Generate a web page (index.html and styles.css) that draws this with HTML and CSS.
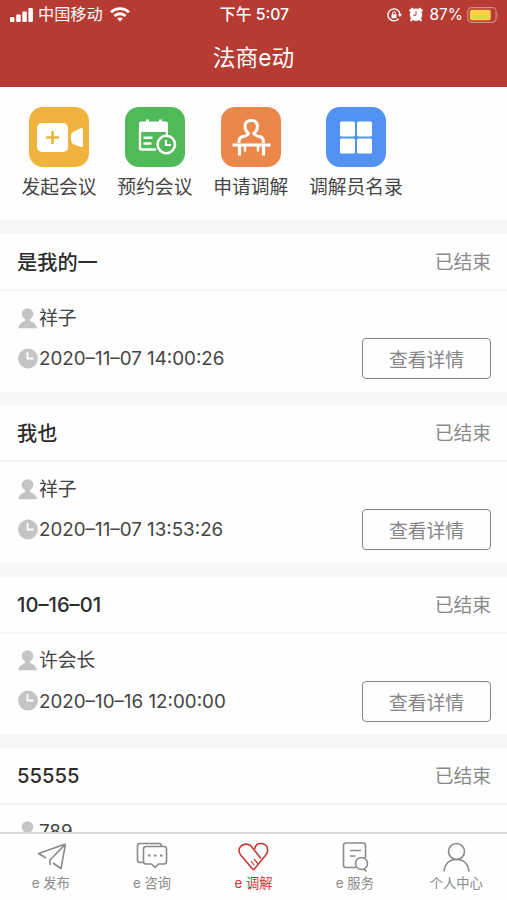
FILE: index.html
```
<!DOCTYPE html>
<html lang="zh-CN">
<head>
<meta charset="UTF-8" />
<meta name="viewport" content="width=device-width, initial-scale=1" />
<title>法商e动</title>
<link rel="stylesheet" href="styles.css">
</head>
<body>
<div id="app">
  <header>
    <div class="status-bar">
      <div class="status-left">
        <svg class="signal" width="23" height="14" viewBox="0 0 23 14" fill="#fff">
          <rect x="0" y="9" width="4.5" height="5" rx="1"/>
          <rect x="6.2" y="6.5" width="4.5" height="7.5" rx="1"/>
          <rect x="12.3" y="3.5" width="4.5" height="10.5" rx="1"/>
          <rect x="18.4" y="0" width="4.5" height="14" rx="1"/>
        </svg>
        <span class="carrier">中国移动</span>
        <svg class="wifi" width="20" height="15" viewBox="0 0 20 15" fill="none" stroke="#fff" stroke-width="2.8">
          <path d="M1 5.2C6.2.5 13.8.5 19 5.2"/>
          <path d="M4.4 9C7.6 6 12.4 6 15.6 9"/>
          <path d="M10 14.6L7 11.6Q10 9.2 13 11.6Z" fill="#fff" stroke="none"/>
        </svg>
      </div>
      <div class="clock">下午 5:07</div>
      <div class="status-right">
        <svg width="15" height="14" viewBox="0 0 15 14" fill="none" stroke="#fff" stroke-width="1.4">
          <path d="M11.6 10.7A6 6 0 1 1 12.9 6"/>
          <path d="M10.8 6h4.2l-2.1 3z" fill="#fff" stroke="none"/>
          <rect x="4.5" y="6.3" width="5" height="3.9" fill="#fff" stroke="none"/>
          <path d="M5.5 6.5V5.2a1.5 1.5 0 0 1 3 0v1.3" stroke-width="1"/>
        </svg>
        <svg class="alarm" width="14" height="15" viewBox="0 0 14 15">
          <circle cx="7" cy="7.8" r="6.2" fill="#fff"/>
          <path d="M.7 4.2L4.1 1.2M13.3 4.2L9.9 1.2M3 12l-1.3 2M11 12l1.3 2" stroke="#fff" stroke-width="2.2"/>
          <path d="M7 4.2v4H4.2" fill="none" stroke="#b63b32" stroke-width="1"/>
        </svg>
        <span class="percent">87%</span>
        <svg width="32" height="16" viewBox="0 0 32 16">
          <rect x=".7" y=".7" width="28.4" height="14.6" rx="4" fill="none" stroke="#d58a83" stroke-width="1.2"/>
          <rect x="2.8" y="2.8" width="21" height="10.4" rx="2" fill="#f6d243"/>
          <path d="M30.5 5.5q1.5 2.5 0 5z" fill="#d58a83"/>
        </svg>
      </div>
    </div>
    <h1>法商e动</h1>
  </header>

  <nav class="shortcuts">
    <a class="shortcut">
      <svg width="60" height="60" viewBox="0 0 60 60">
        <rect width="60" height="60" rx="14" fill="#f0b33e"/>
        <rect x="8" y="16" width="31" height="29" rx="5" fill="#fff"/>
        <path d="M54 22.5v16q0 2-2 1.5l-7-2.500q-3-1.500-3-4v-5q0-2.500 3-4l7-3.500q2-.5 2 1.500z" fill="#fff"/>
        <path d="M23.5 24v13M17 30.5h13" stroke="#f0b33e" stroke-width="2.6"/>
      </svg>
      <span>发起会议</span>
    </a>
    <a class="shortcut">
      <svg width="60" height="60" viewBox="0 0 60 60">
        <rect width="60" height="60" rx="14" fill="#4fba57"/>
        <path d="M14 16.5q0-2 2-2h5v-2h3v2h10v-2h3v2h4q2 0 2 2V25H14z" fill="#fff"/>
        <path d="M15 24v16.5q0 2 2 2h14" fill="none" stroke="#fff" stroke-width="2.4"/>
        <path d="M41.9 24v4" stroke="#fff" stroke-width="2.2"/>
        <path d="M18.5 30.8h9M18.5 36.5h8" stroke="#fff" stroke-width="2.4"/>
        <circle cx="41.3" cy="37.5" r="8.7" fill="#4fba57" stroke="#fff" stroke-width="2.6"/>
        <path d="M41 33v5h5" fill="none" stroke="#fff" stroke-width="2.2"/>
      </svg>
      <span>预约会议</span>
    </a>
    <a class="shortcut">
      <svg width="60" height="60" viewBox="0 0 60 60" fill="none" stroke="#fff">
        <rect width="60" height="60" rx="14" fill="#eb874b" stroke="none"/>
        <path d="M18 36v-2q0-3.500 4-4.500 5-1 5.500-3-3.500-3-3.500-7 0-6 6.200-6t6.200 6q0 4-3.500 7 .5 2 5.500 3 4 1 4 4.500v2" stroke-width="3"/>
        <path d="M11.5 38h38" stroke-width="3"/>
        <path d="M18.5 38v10.500M42.5 38v10.500" stroke-width="3.2"/>
        <path d="M24 38v6.500M37 38v6.500" stroke-width="2.4"/>
      </svg>
      <span>申请调解</span>
    </a>
    <a class="shortcut">
      <svg width="60" height="60" viewBox="0 0 60 60" fill="#fff">
        <rect width="60" height="60" rx="14" fill="#5292f3"/>
        <rect x="14" y="14.5" width="15" height="15" rx="1.5"/>
        <rect x="31" y="14.5" width="15" height="15" rx="1.5"/>
        <rect x="14" y="31.5" width="15" height="15" rx="1.5"/>
        <rect x="31" y="31.5" width="15" height="15" rx="1.5"/>
      </svg>
      <span>调解员名录</span>
    </a>
  </nav>

  <main id="meeting-list"></main>

  <footer class="tabbar">
    <a class="tab">
      <svg width="30" height="30" viewBox="0 0 30 30">
        <path d="M29.500 2L2.500 11.500 10 16M29.500 2L25 26.500l-8-5.500M29.500 2L14 18v5"/>
      </svg>
      <span>e 发布</span>
    </a>
    <a class="tab">
      <svg width="32" height="30" viewBox="0 0 32 30">
        <path d="M7 20.5H4q-2.500 0-2.500-2.500V4q0-2.500 2.500-2.500h19q2.500 0 2.500 2.500"/>
        <path d="M10 4.500h18q2.500 0 2.500 2.500v12.500q0 2.500-2.500 2.500h-5.500L19 25.500 15.500 22H10q-2.500 0-2.500-2.500V7q0-2.500 2.500-2.500z"/>
        <path d="M12 13.500h2.500M18 13.500h2.500M24 13.500h2.500" stroke-width="2.2"/>
      </svg>
      <span>e 咨询</span>
    </a>
    <a class="tab active">
      <svg width="32" height="30" viewBox="0 0 32 30">
        <path d="M16.500 28L4 13.500Q0 8 4 4 9 .5 13.500 3.500L24 16.500"/>
        <path d="M17.500 7.500Q18.500 1 25 1.500 31.500 3 30.500 9.500 30 12 28 14L16.500 28"/>
        <path d="M14 19l3.500 4.500M17 17l3.800 4.500" stroke-width="1.2"/>
      </svg>
      <span>e 调解</span>
    </a>
    <a class="tab">
      <svg width="30" height="30" viewBox="0 0 30 30">
        <path d="M16 25.500H6q-2.500 0-2.500-2.500V3.500Q3.500 1 6 1h17q2.500 0 2.500 2.500V16"/>
        <path d="M10 8.500h11M10 14h5.500"/>
        <circle cx="21.500" cy="21.500" r="6"/>
        <path d="M23.500 27l3 2.300"/>
      </svg>
      <span>e 服务</span>
    </a>
    <a class="tab">
      <svg width="30" height="30" viewBox="0 0 30 30">
        <circle cx="15.500" cy="9.500" r="8"/>
        <path d="M3 29.500q1.500-12 12.500-12t12.500 12"/>
      </svg>
      <span>个人中心</span>
    </a>
  </footer>
</div>

<script>
(() => {
  const meetings = [
    { title: "是我的一", name: "祥子", time: "2020–11–07 14:00:26" },
    { title: "我也", name: "祥子", time: "2020–11–07 13:53:26" },
    { title: "10–16–01", name: "许会长", time: "2020–10–16 12:00:00" },
    { title: "55555", name: "789", time: "" }
  ];

  const userIcon = `<svg width="20" height="21" viewBox="0 0 20 21" fill="#c4c4c4">
    <circle cx="9.500" cy="6" r="5.800"/>
    <path d="M.3 20.300Q1 15 7 13V10h5v3q6 2 7 7.300z"/>
  </svg>`;
  const clockIcon = `<svg width="20" height="21" viewBox="0 0 20 21">
    <circle cx="10" cy="10.500" r="9.900" fill="#c4c4c4"/>
    <path d="M9.500 4v6.500h6" fill="none" stroke="#fff" stroke-width="1.800"/>
  </svg>`;

  document.getElementById("meeting-list").innerHTML = meetings.map(m => `
    <section class="card">
      <div class="card-head">
        <h2>${m.title}</h2>
        <span class="state">已结束</span>
      </div>
      <div class="card-body">
        <div class="info">
          <div class="row">${userIcon}<span>${m.name}</span></div>
          ${m.time ? `<div class="row time">${clockIcon}<span>${m.time}</span></div>` : ""}
        </div>
        ${m.time ? "<button>查看详情</button>" : ""}
      </div>
    </section>`).join("");
})();
</script>
</body>
</html>
```

FILE: styles.css
```
* {
  box-sizing: border-box;
}
body {
  margin: 0;
  font-family: Inter, "Noto Sans CJK SC", sans-serif;
  background: #f6f6f6;
  color: #444;
}
#app {
  height: 900px;
  display: flex;
  flex-direction: column;
  overflow: hidden;
}
header {
  flex: none;
  height: 87px;
  background: #b63b32;
  color: #fff;
}
.status-bar {
  height: 29px;
  padding: 0 8px 0 10px;
  display: grid;
  grid-template-columns: 1fr auto 1fr;
  align-items: center;
  font-size: 15.5px;
  line-height: 29px;
}
.status-left,
.status-right {
  display: flex;
  align-items: center;
}
.status-right {
  justify-content: flex-end;
}
.carrier {
  margin: 0 7px 0 5px;
  font-size: 16.2px;
}
.clock {
  font-size: 15.8px;
  font-weight: 500;
}
.alarm {
  margin: 0 6px 0 7px;
}
.percent {
  margin-right: 4px;
}
h1 {
  margin: 0;
  font-size: 22.7px;
  font-weight: 400;
  line-height: 57px;
  text-align: center;
}
.shortcuts {
  flex: none;
  height: 133px;
  padding: 20px 21.5px 0;
  display: flex;
  gap: 20.7px;
  background: #fefefe;
}
.shortcut {
  display: flex;
  flex-direction: column;
  align-items: center;
  font-size: 18.8px;
  line-height: 42px;
}
#meeting-list {
  flex: 1;
  min-height: 0;
  overflow: hidden;
  padding-top: 14px;
}
.card {
  height: 157.6px;
  margin-bottom: 13.7px;
  background: #fefefe;
}
.card-head {
  height: 57px;
  padding: 0 16px 0 17px;
  display: flex;
  justify-content: space-between;
  align-items: center;
  border-bottom: 2px solid #f4f4f4;
}
h2 {
  margin: 0;
  font-size: 20.2px;
  font-weight: 500;
  line-height: 54px;
  padding-top: 2px;
  color: #2c2c2c;
}
.state {
  font-size: 18.8px;
  line-height: 28px;
  margin-top: 3px;
  color: #8a8a8a;
}
.card-body {
  padding: 7px 16px 0 18px;
  display: flex;
  justify-content: space-between;
}
.row {
  height: 40px;
  display: flex;
  align-items: center;
  gap: 1px;
  font-size: 18.8px;
  white-space: nowrap;
}
.row span {
  line-height: 28px;
  margin-top: 1px;
}
.row.time span {
  margin-top: 2px;
}
button {
  width: 129px;
  height: 41px;
  margin-top: 40px;
  padding: 0;
  background: #fefefe;
  border: 1.5px solid #858585;
  border-radius: 4px;
  font-family: inherit;
  font-size: 18.8px;
  color: #858585;
}
.tabbar {
  flex: none;
  height: 68px;
  padding-top: 8px;
  display: grid;
  grid-template-columns: repeat(5, 1fr);
  background: #fefefe;
  border-top: 2px solid #dadada;
}
.tab {
  display: flex;
  flex-direction: column;
  align-items: center;
  font-size: 13.3px;
  line-height: 23px;
  color: #8a8a8a;
}
.tab svg {
  fill: none;
  stroke: currentColor;
  stroke-width: 1.6;
  stroke-linejoin: round;
}
.tab.active {
  color: #c23a33;
}
```
